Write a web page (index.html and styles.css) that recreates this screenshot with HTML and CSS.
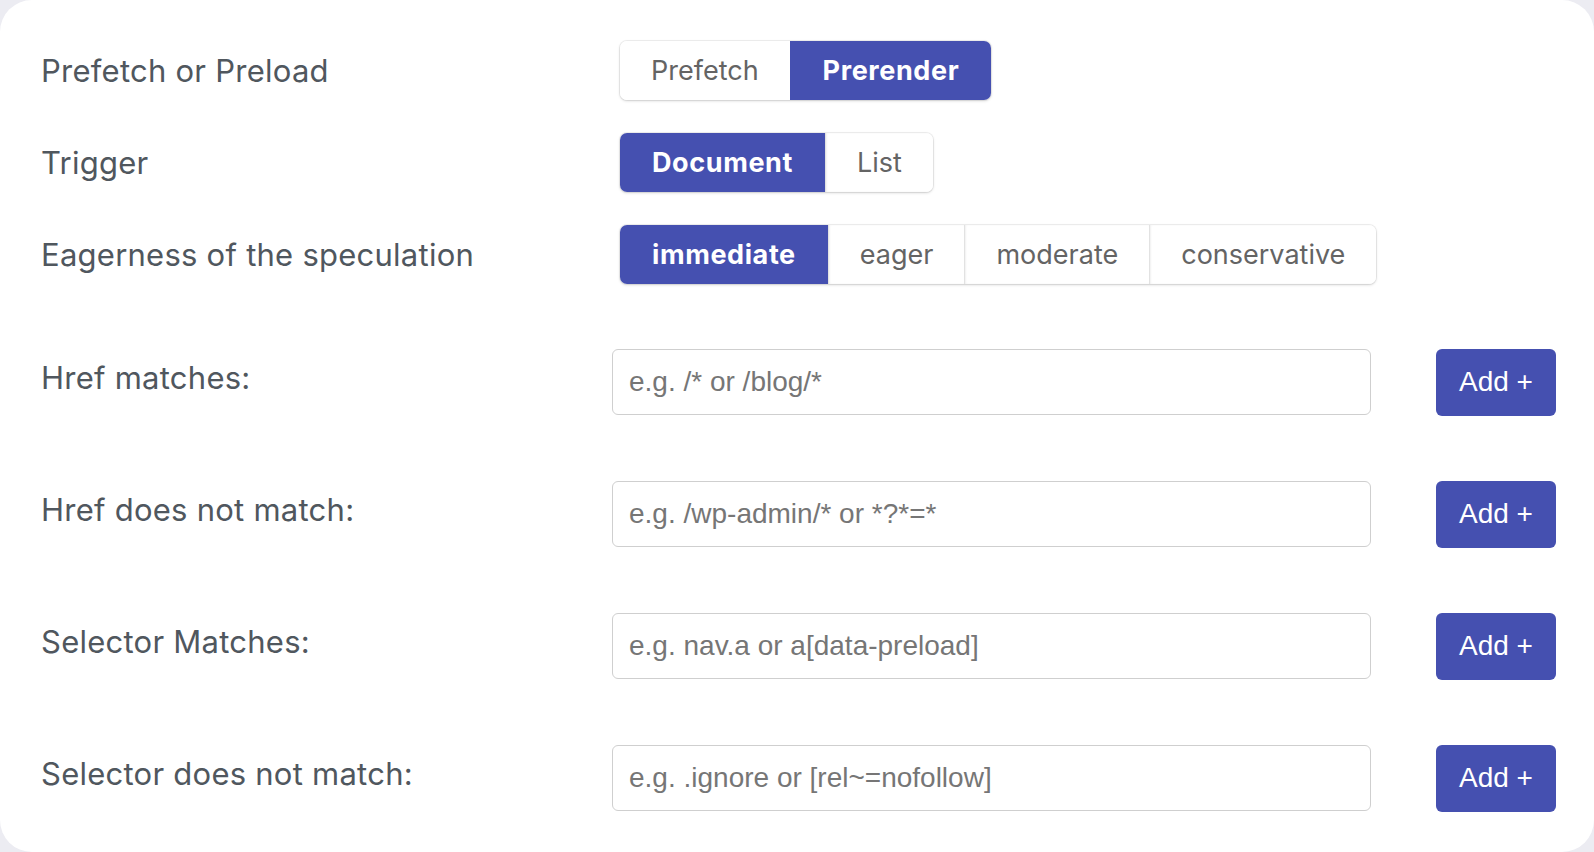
FILE: index.html
```html
<!DOCTYPE html>
<html lang="en">
<head>
<meta charset="utf-8">
<title>Speculation rules</title>
<link rel="stylesheet" href="styles.css">
</head>
<body>
<div class="card">
  <div class="seg-row">
    <div class="label">Prefetch or Preload</div>
    <div class="seg">
      <button class="seg-btn">Prefetch</button>
      <button class="seg-btn active">Prerender</button>
    </div>
  </div>
  <div class="seg-row">
    <div class="label">Trigger</div>
    <div class="seg">
      <button class="seg-btn active">Document</button>
      <button class="seg-btn">List</button>
    </div>
  </div>
  <div class="seg-row">
    <div class="label">Eagerness of the speculation</div>
    <div class="seg">
      <button class="seg-btn active">immediate</button>
      <button class="seg-btn">eager</button>
      <button class="seg-btn">moderate</button>
      <button class="seg-btn">conservative</button>
    </div>
  </div>

  <div class="fields">
    <div class="field-row">
      <div class="label field-label">Href matches:</div>
      <input class="text-input" type="text" placeholder="e.g. /* or /blog/*">
      <button class="add-btn">Add +</button>
    </div>
    <div class="field-row">
      <div class="label field-label">Href does not match:</div>
      <input class="text-input" type="text" placeholder="e.g. /wp-admin/* or *?*=*">
      <button class="add-btn">Add +</button>
    </div>
    <div class="field-row">
      <div class="label field-label">Selector Matches:</div>
      <input class="text-input" type="text" placeholder="e.g. nav.a or a[data-preload]">
      <button class="add-btn">Add +</button>
    </div>
    <div class="field-row">
      <div class="label field-label">Selector does not match:</div>
      <input class="text-input" type="text" placeholder="e.g. .ignore or [rel~=nofollow]">
      <button class="add-btn">Add +</button>
    </div>
  </div>
</div>
</body>
</html>
```
FILE: styles.css
```css
* { box-sizing: border-box; }
html, body { margin: 0; padding: 0; }
body {
  background: #ececf2;
  width: 1594px;
  height: 852px;
  overflow: hidden;
}
.card {
  background: #ffffff;
  width: 1594px;
  height: 852px;
  border-radius: 32px;
  padding: 41px 38px 0 41px;
  display: flex;
  flex-direction: column;
}
.label {
  font-family: Inter, "Liberation Sans", sans-serif;
  font-size: 31px;
  color: #50575e;
  line-height: 40px;
  letter-spacing: 0.25px;
}
.seg-row {
  display: flex;
  align-items: center;
  margin-bottom: 33px;
}
.seg-row .label {
  width: 579px;
  flex: none;
}
.seg {
  display: flex;
  border-radius: 7px;
  box-shadow: 0 0 0 1px rgba(0,0,0,0.06), 0 1px 3px rgba(0,0,0,0.16);
  overflow: hidden;
}
.seg-btn {
  font-family: Inter, "Liberation Sans", sans-serif;
  font-size: 27px;
  height: 59px;
  padding: 0 31px;
  border: none;
  border-left: 1px solid #e2e2e2;
  background: #ffffff;
  color: #646464;
  cursor: pointer;
  box-shadow: inset 1px 0 2px rgba(0,0,0,0.06);
}
.seg-btn:first-child { border-left: none; box-shadow: none; }
.seg-btn.active {
  background: #4550b0;
  color: #ffffff;
  font-weight: 700;
  letter-spacing: 0.6px;
  padding: 0 32px;
  border-left-color: #4550b0;
  box-shadow: none;
}
.fields {
  margin-top: 32px;
  display: flex;
  flex-direction: column;
  gap: 66px;
}
.field-row {
  display: flex;
  align-items: center;
  height: 66px;
}
.field-label {
  width: 571px;
  flex: none;
  padding-bottom: 8px;
}
.text-input {
  width: 759px;
  height: 66px;
  border: 1.5px solid #cfcfcf;
  border-radius: 6px;
  padding: 0 16px;
  font-family: "Liberation Sans", Arial, sans-serif;
  font-size: 28px;
  color: #333;
  background: #fff;
  outline: none;
}
.text-input::placeholder { color: #767676; }
.add-btn {
  margin-left: 65px;
  width: 120px;
  height: 67px;
  border: none;
  border-radius: 6px;
  background: #4550b0;
  color: #ffffff;
  font-family: "Liberation Sans", Arial, sans-serif;
  font-size: 28px;
  cursor: pointer;
  padding: 0;
}
```
